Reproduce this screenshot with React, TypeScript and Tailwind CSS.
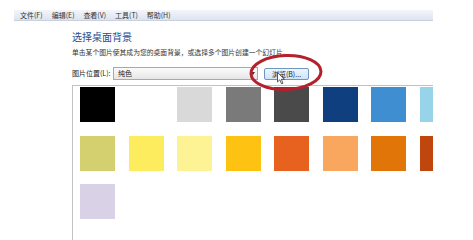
const menus = ['文件(F)', '编辑(E)', '查看(V)', '工具(T)', '帮助(H)']

const swatches = [
  '#000000', '#ffffff', '#d9d9d9', '#7a7a7a', '#4a4a4a', '#0f3f7f', '#3f8ed2', '#98d4e9',
  '#d5d06f', '#fdec5e', '#fdf394', '#fdc212', '#e8621f', '#f9a65e', '#e27507', '#bf470d',
  '#d9d1e5',
]

export default function App() {
  return (
    <div className="relative h-[240px] w-[473px] overflow-hidden bg-white font-['Noto_Sans_CJK_SC',sans-serif] text-[#222]">
      <div className="ml-[14px] mt-[10px] w-[419px]">
        {/* menu bar */}
        <div className="flex h-[11px] items-center border-b border-[#c9d0de] bg-gradient-to-b from-[#f3f5fa] to-[#dde3ef] pl-[6px] text-[7px] leading-none text-[#333]">
          {menus.map((m) => (
            <span key={m} className="w-[31.7px] whitespace-nowrap">
              {m}
            </span>
          ))}
        </div>

        <div className="pl-[58px]">
          <h1 className="mt-[10px] text-[10px] leading-[12px] text-[#2b4c8c]">选择桌面背景</h1>
          <p className="mt-[4.5px] whitespace-nowrap text-[6.8px] leading-[9px] text-[#333]">
            单击某个图片使其成为您的桌面背景，或选择多个图片创建一个幻灯片。
          </p>

          <div className="mt-[10.5px] flex h-[13px] items-center">
            <span className="w-[41px] whitespace-nowrap text-[7px] leading-none">图片位置(L):</span>
            <div className="relative flex h-[13px] w-[145px] items-center border border-[#a9a9a9] bg-gradient-to-b from-[#fbfbfb] to-[#e6e6e6] pl-[4px] text-[7px] leading-none">
              纯色
              <span className="absolute right-[2px] top-[4px] h-0 w-0 border-x-[2.5px] border-t-[3px] border-x-transparent border-t-[#333]" />
            </div>
            <div className="ml-[6px] mt-[1px] flex h-[12px] w-[45px] items-center justify-center rounded-[2px] border border-[#6f95c2] bg-gradient-to-b from-[#eef6fd] to-[#cfe4f6] text-[7px] leading-none">
              浏览(B)...
            </div>
          </div>

          <div className="mt-[5px] h-[160px] w-[361px] overflow-hidden border-l border-t border-[#c2c2c2] pl-[7px] pt-[1px]">
            <div className="grid w-[400px] grid-cols-[repeat(8,35px)] gap-x-[13.5px] gap-y-[13.5px]">
              {swatches.map((c, i) => (
                <div key={i} className="h-[35px] w-[35px]" style={{ backgroundColor: c }} />
              ))}
            </div>
          </div>
        </div>
      </div>

      {/* red annotation ellipse */}
      <svg className="absolute left-[248px] top-[53px]" width="76" height="39" viewBox="0 0 76 39">
        <ellipse cx="38" cy="19.5" rx="35" ry="17" fill="none" stroke="#b3212c" strokeWidth="3" transform="rotate(-2 38 19.5)" />
      </svg>

      {/* mouse cursor */}
      <svg className="absolute left-[277px] top-[72px]" width="9" height="13" viewBox="0 0 9 13">
        <path d="M0.5 0.5 L0.5 10 L2.8 7.8 L4.5 11.8 L6 11.2 L4.3 7.3 L7.5 7.3 Z" fill="#fff" stroke="#333" strokeWidth="0.8" strokeLinejoin="round" />
      </svg>
    </div>
  )
}
